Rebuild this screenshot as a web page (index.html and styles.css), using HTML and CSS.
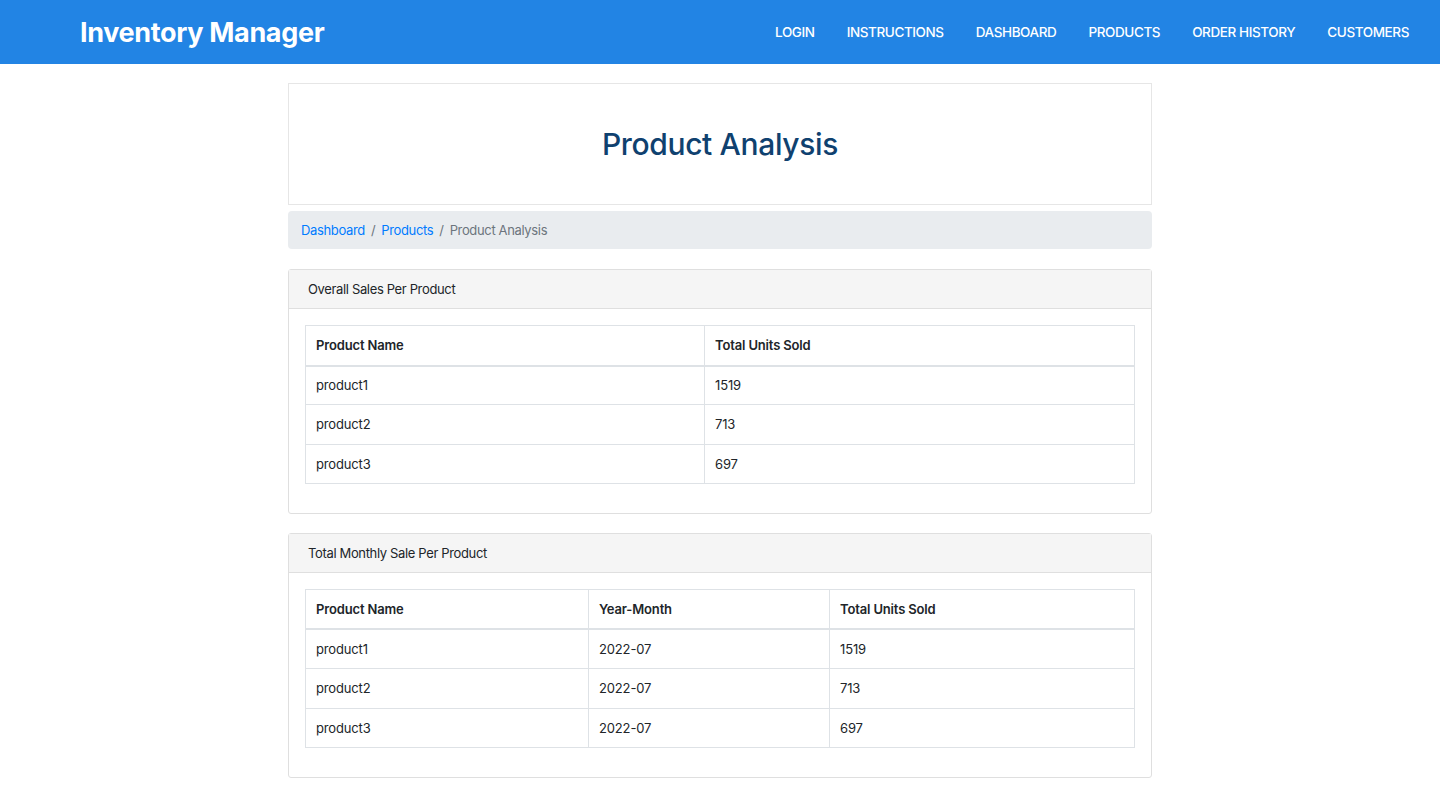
FILE: index.html
```html
<!DOCTYPE html>
<html lang="en">
<head>
<meta charset="utf-8">
<title>Product Analysis</title>
<link rel="stylesheet" href="styles.css">
</head>
<body>
<header class="navbar">
  <a class="brand" href="#">Inventory Manager</a>
  <nav class="nav">
    <a href="#">LOGIN</a>
    <a href="#">INSTRUCTIONS</a>
    <a href="#">DASHBOARD</a>
    <a href="#">PRODUCTS</a>
    <a href="#">ORDER HISTORY</a>
    <a href="#">CUSTOMERS</a>
  </nav>
</header>
<main class="container">
  <section class="title-box">
    <h1>Product Analysis</h1>
  </section>
  <ol class="breadcrumb">
    <li><a href="#">Dashboard</a></li>
    <li class="sep">/</li>
    <li><a href="#">Products</a></li>
    <li class="sep">/</li>
    <li class="active">Product Analysis</li>
  </ol>

  <section class="card">
    <div class="card-header">Overall Sales Per Product</div>
    <div class="card-body">
      <table class="table">
        <colgroup><col class="c1a"><col></colgroup>
        <thead><tr><th>Product Name</th><th>Total Units Sold</th></tr></thead>
        <tbody>
          <tr><td>product1</td><td>1519</td></tr>
          <tr><td>product2</td><td>713</td></tr>
          <tr><td>product3</td><td>697</td></tr>
        </tbody>
      </table>
    </div>
  </section>

  <section class="card">
    <div class="card-header">Total Monthly Sale Per Product</div>
    <div class="card-body">
      <table class="table">
        <colgroup><col class="c2a"><col class="c2b"><col></colgroup>
        <thead><tr><th>Product Name</th><th>Year-Month</th><th>Total Units Sold</th></tr></thead>
        <tbody>
          <tr><td>product1</td><td>2022-07</td><td>1519</td></tr>
          <tr><td>product2</td><td>2022-07</td><td>713</td></tr>
          <tr><td>product3</td><td>2022-07</td><td>697</td></tr>
        </tbody>
      </table>
    </div>
  </section>
</main>
</body>
</html>
```

FILE: styles.css
```css
* { box-sizing: border-box; }
html, body { margin: 0; padding: 0; }
body {
  font-family: Inter, "Noto Sans", "Liberation Sans", sans-serif;
  color: #212529;
  background: #fff;
  font-size: 13px;
}
a { text-decoration: none; }

.navbar {
  height: 64px;
  background: #2284e4;
  display: flex;
  align-items: center;
  justify-content: space-between;
  padding: 0 31px 0 80px;
}
.brand {
  color: #fff;
  font-size: 27px;
  font-weight: 700;
  letter-spacing: -0.35px;
}
.nav {
  display: flex;
  gap: 32px;
}
.nav a {
  color: #fff;
  font-size: 13.5px;
  font-weight: 500;
  letter-spacing: -0.4px;
}

.container {
  width: 864px;
  margin: 19px auto 0;
}

.title-box {
  border: 1px solid #e6e6e6;
  height: 122px;
  display: flex;
  align-items: center;
  justify-content: center;
}
.title-box h1 {
  margin: 0;
  font-size: 30px;
  font-weight: 500;
  color: #0f416f;
  letter-spacing: -0.35px;
}

.breadcrumb {
  list-style: none;
  margin: 6px 0 20px;
  padding: 0 13px;
  height: 38px;
  background: #e9ecef;
  border-radius: 4px;
  display: flex;
  align-items: center;
  gap: 6px;
  font-size: 13px;
  letter-spacing: -0.35px;
}
.breadcrumb a { color: #007bff; }
.breadcrumb .sep { color: #6c757d; }
.breadcrumb .active { color: #6c757d; }

.card {
  border: 1px solid #dfdfdf;
  border-radius: 3px;
  margin-bottom: 19px;
}
.card-header {
  background: #f5f5f5;
  border-bottom: 1px solid #dfdfdf;
  height: 39px;
  display: flex;
  align-items: center;
  padding: 0 19px;
  font-size: 13px;
  letter-spacing: -0.35px;
  color: #212529;
}
.card-body {
  padding: 16px 16px 29px;
}

.table {
  width: 100%;
  border-collapse: collapse;
  font-size: 13px;
  letter-spacing: -0.15px;
}
.table th, .table td {
  border: 1px solid #dee2e6;
  text-align: left;
  padding: 0 10px;
}
.table th {
  font-weight: 600;
  border-bottom: 2px solid #dee2e6;
  height: 40px;
}
.table td { height: 39.33px; }
.c1a { width: 399px; }
.c2a { width: 283px; }
.c2b { width: 241px; }
```
